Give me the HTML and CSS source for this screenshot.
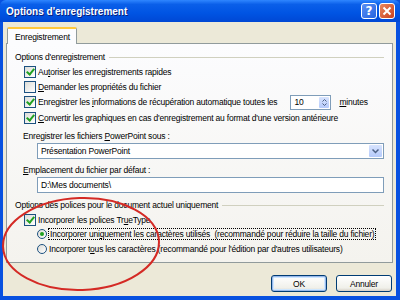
FILE: index.html
```html
<!DOCTYPE html>
<html lang="fr">
<head>
  <meta charset="UTF-8" />
  <title>Options d'enregistrement</title>
  <link rel="stylesheet" href="styles.css">
</head>
<body>
  <div class="window">
    <div class="titlebar">
      <span class="title">Options d'enregistrement</span>
      <span class="tb-btn help">?</span>
      <span class="tb-btn close">
        <svg width="10" height="10" viewBox="0 0 10 10"><path d="M1.5 1.5 L8.5 8.5 M8.5 1.5 L1.5 8.5" stroke="#fff" stroke-width="2" /></svg>
      </span>
    </div>

    <div class="frame">
      <div class="tabs">
        <span class="tab">Enregistrement</span>
      </div>

      <div class="panel">
        <div class="group-title"><span>Options d'enregistrement</span></div>

        <div class="row check-row">
          <span class="check on"></span>
          <span>Au<u>t</u>oriser les enregistrements rapides</span>
        </div>
        <div class="row check-row">
          <span class="check"></span>
          <span><u>D</u>emander les propriétés du fichier</span>
        </div>
        <div class="row check-row tall">
          <span class="check on"></span>
          <span>Enregistrer les <u>i</u>nformations de récupération automatique toutes les</span>
          <span class="spin">
            <span class="spin-value">10</span>
            <span class="spin-btn">
              <svg width="5" height="9" viewBox="0 0 5 9"><path d="M0.5 3.5 L2.5 1.5 L4.5 3.5 M0.5 5.5 L2.5 7.5 L4.5 5.5" stroke="#4d6185" fill="none" /></svg>
            </span>
          </span>
          <span class="minutes"><u>m</u>inutes</span>
        </div>
        <div class="row check-row">
          <span class="check on"></span>
          <span><u>C</u>onvertir les graphiques en cas d'enregistrement au format d'une version antérieure</span>
        </div>

        <div class="row field-label"><span>Enregistrer les fichiers <u>P</u>owerPoint sous :</span></div>
        <div class="field select">
          <span>Présentation PowerPoint</span>
          <span class="drop-btn">
            <svg width="7" height="5" viewBox="0 0 7 5"><path d="M0.5 0.5 L3.5 3.5 L6.5 0.5" stroke="#4d6185" stroke-width="1.5" fill="none" /></svg>
          </span>
        </div>

        <div class="row field-label"><span><u>E</u>mplacement du fichier par défaut :</span></div>
        <div class="field">
          <span>D:\Mes documents\</span>
        </div>

        <div class="group-title second"><span>Options des polices pour le document actuel uniquement</span></div>

        <div class="row check-row">
          <span class="check on"></span>
          <span>Incorporer les polices Tr<u>u</u>eType</span>
        </div>
        <div class="row radio-row">
          <span class="radio on"></span>
          <span class="focus">Incorporer uni<u>q</u>uement les caractères utilisés&nbsp; (recommandé pour réduire la taille du fichier)</span>
        </div>
        <div class="row radio-row">
          <span class="radio"></span>
          <span>Incorporer t<u>o</u>us les caractères (recommandé pour l'édition par d'autres utilisateurs)</span>
        </div>
      </div>

      <div class="buttons">
        <span class="button default">OK</span>
        <span class="button">Annuler</span>
      </div>
    </div>

    <svg class="annotation" width="170" height="100" viewBox="0 0 170 100">
      <ellipse cx="81" cy="48" rx="78" ry="46" fill="none" stroke="#d42a25" stroke-width="2" transform="rotate(-2 81 48)" />
    </svg>
  </div>
</body>
</html>
```

FILE: styles.css
```css
body {
  margin: 0;
  width: 400px;
  height: 300px;
  overflow: hidden;
  font-family: "Liberation Sans", Arial, sans-serif;
  font-size: 8.5px;
  letter-spacing: -0.2px;
  color: #000;
}

u {
  text-decoration: underline;
  text-underline-offset: 1px;
}

.window {
  position: relative;
  height: 300px;
  display: flex;
  flex-direction: column;
  background: #0851e0;
}

.titlebar {
  height: 22px;
  display: flex;
  align-items: center;
  padding: 0 5px 0 6px;
  background: linear-gradient(#2f86ff 0%, #0a5fe9 20%, #0054e3 60%, #0047d4 100%);
  border-radius: 6px 6px 0 0;
}

.title {
  flex: 1;
  color: #fff;
  font-family: "Liberation Sans", Arial, sans-serif;
  font-weight: bold;
  font-size: 10px;
  letter-spacing: 0;
  text-shadow: 1px 1px 0 #0a1f7a;
}

.tb-btn {
  width: 16px;
  height: 16px;
  box-sizing: border-box;
  border: 1px solid #fff;
  border-radius: 3px;
  display: flex;
  align-items: center;
  justify-content: center;
  color: #fff;
  font-family: "DejaVu Sans", sans-serif;
  font-weight: bold;
  font-size: 12px;
  letter-spacing: 0;
}

.help {
  background: linear-gradient(135deg, #5a8ff4, #2563e0);
  margin-right: 2px;
}

.close {
  background: linear-gradient(135deg, #e9885f, #c9401e);
}

.frame {
  flex: 1;
  margin: 0 4px 4px 3px;
  background: #ece9d8;
  padding: 5px 3px 0 3px;
  display: flex;
  flex-direction: column;
}

.tabs {
  display: flex;
  padding-left: 1px;
  height: 16px;
}

.tab {
  position: relative;
  z-index: 1;
  height: 17px;
  box-sizing: border-box;
  padding: 3px 6px 0 7px;
  background: #fcfcfe;
  border: 1px solid #919b9c;
  border-bottom: none;
  border-top: 2px solid #ffc83c;
  border-radius: 2px 2px 0 0;
}

.panel {
  height: 220px;
  box-sizing: border-box;
  border: 1px solid #919b9c;
  background: linear-gradient(#fcfcfe, #f4f3ee);
  padding: 6px 8px 0 8px;
}

.row {
  display: flex;
  align-items: center;
  height: 15px;
  white-space: nowrap;
}

.group-title {
  display: flex;
  align-items: center;
  height: 14px;
  gap: 4px;
}

.group-title::after {
  content: "";
  flex: 1;
  border-top: 1px solid #d0d0bf;
}

.group-title.second {
  margin-top: 5px;
}

.check-row {
  padding-left: 9px;
}

.tall {
  height: 16px;
}

.check {
  width: 12px;
  height: 12px;
  box-sizing: border-box;
  border: 1px solid #1c5180;
  background: linear-gradient(135deg, #dcdcd7, #fff);
  margin-right: 2px;
  flex: none;
  position: relative;
}

.check.on::after {
  content: "";
  position: absolute;
  left: 3px;
  top: 0px;
  width: 3px;
  height: 6px;
  border: solid #21a121;
  border-width: 0 2px 2px 0;
  transform: rotate(40deg);
}

.spin {
  display: flex;
  margin-left: 13px;
  width: 41px;
  height: 15px;
  box-sizing: border-box;
  border: 1px solid #7f9db9;
  background: #fff;
}

.spin-value {
  flex: 1;
  padding: 1px 0 0 3px;
}

.spin-btn {
  width: 10px;
  margin: 1px;
  background: linear-gradient(#d7e3fd, #b5cafb);
  border-radius: 1px;
  display: flex;
  align-items: center;
  justify-content: center;
}

.minutes {
  margin-left: 8px;
}

.field-label {
  padding-left: 8px;
  margin-top: 3px;
}

.field {
  margin: 0 0 0 22px;
  height: 16px;
  box-sizing: border-box;
  border: 1px solid #7f9db9;
  background: #fff;
  display: flex;
  align-items: center;
  padding-left: 3px;
  white-space: nowrap;
}

.select {
  padding-right: 1px;
}

.select span:first-child {
  flex: 1;
}

.drop-btn {
  width: 13px;
  height: 12px;
  background: linear-gradient(#d7e3fd, #b5cafb);
  border-radius: 1px;
  display: flex;
  align-items: center;
  justify-content: center;
}

.radio-row {
  padding-left: 22px;
  height: 14.5px;
}

.radio {
  width: 10px;
  height: 10px;
  box-sizing: border-box;
  border: 1px solid #1c5180;
  border-radius: 50%;
  background: linear-gradient(135deg, #dcdcd7, #fff);
  margin-right: 2px;
  flex: none;
  display: flex;
  align-items: center;
  justify-content: center;
}

.radio.on::after {
  content: "";
  width: 4px;
  height: 4px;
  border-radius: 50%;
  background: #21a121;
}

.focus {
  outline: 1px dotted #000;
  outline-offset: 0;
  padding: 0 1px;
}

.buttons {
  display: flex;
  justify-content: flex-end;
  gap: 9px;
  margin-top: 12px;
  padding-right: 1px;
}

.button {
  width: 56px;
  height: 17px;
  box-sizing: border-box;
  border: 1px solid #003c74;
  border-radius: 3px;
  background: linear-gradient(#fff, #f0f0ea 80%, #d6d0c5);
  display: flex;
  align-items: center;
  justify-content: center;
}

.button.default {
  box-shadow: inset 0 0 0 1px #98b8ea, inset 0 0 0 2px #cee7ff;
}

.annotation {
  position: absolute;
  left: 0;
  top: 196px;
}
```
